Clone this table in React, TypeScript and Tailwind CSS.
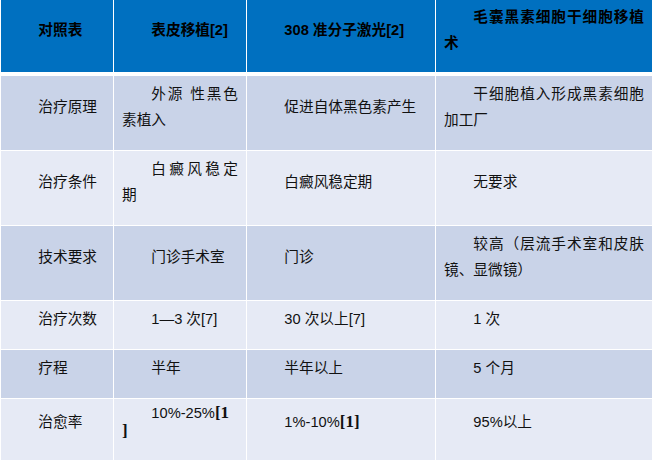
import type { ReactNode } from "react";

// bold serif citation marker, as in the source document
const Cite = ({ children }: { children: ReactNode }) => (
    <b className="font-['Liberation_Serif',serif] text-[17px] font-bold">{children}</b>
);

type Row = {
    cells: ReactNode[];
    dark: boolean;
    tight?: boolean;
};

const header = ["对照表", "表皮移植[2]", "308 准分子激光[2]", "毛囊黑素细胞干细胞移植术"];

const rows: Row[] = [
    {
        cells: ["治疗原理", "外源 性黑色素植入", "促进自体黑色素产生", "干细胞植入形成黑素细胞加工厂"],
        dark: true,
    },
    {
        cells: ["治疗条件", "白癜风稳定期", "白癜风稳定期", "无要求"],
        dark: false,
    },
    {
        cells: ["技术要求", "门诊手术室", "门诊", "较高（层流手术室和皮肤镜、显微镜）"],
        dark: true,
    },
    {
        cells: ["治疗次数", "1—3 次[7]", "30 次以上[7]", "1 次"],
        dark: false,
    },
    {
        cells: ["疗程", "半年", "半年以上", "5 个月"],
        dark: true,
    },
    {
        cells: [
            "治愈率",
            <>
                10%-25%<Cite>[1</Cite>
                <br />
                <Cite>]</Cite>
            </>,
            <>
                1%-10%<Cite>[1]</Cite>
            </>,
            "95%以上",
        ],
        dark: false,
        tight: true,
    },
];

export default function App() {
    return (
        <div className="h-[460px] w-[653px] overflow-hidden bg-white font-['Liberation_Sans','Noto_Sans_CJK_SC',sans-serif] text-[14.67px] leading-[26px] text-[#111]">
            <table className="-mt-px table-fixed border-separate border-spacing-px">
                <colgroup>
                    <col className="w-[112px]" />
                    <col className="w-[132px]" />
                    <col className="w-[188px]" />
                    <col className="w-[216px]" />
                </colgroup>
                <thead>
                    <tr>
                        {header.map((h) => (
                            <th
                                key={h}
                                className="border-b-[3px] border-white bg-[#0070c0] px-2 pt-[4px] pb-[16px] text-justify align-middle font-bold indent-[2em] text-black"
                            >
                                {h}
                            </th>
                        ))}
                    </tr>
                </thead>
                <tbody>
                    {rows.map((row, i) => (
                        <tr key={i} className={row.tight ? "leading-[18px]" : ""}>
                            {row.cells.map((cell, j) => (
                                <td
                                    key={j}
                                    className={`px-2 pt-[5px] text-justify align-middle indent-[2em] ${
                                        row.tight ? "pb-[30px]" : "pb-[17px]"
                                    } ${row.dark ? "bg-[#c9d3e8]" : "bg-[#e6eaf5]"}`}
                                >
                                    {cell}
                                </td>
                            ))}
                        </tr>
                    ))}
                </tbody>
            </table>
        </div>
    );
}
